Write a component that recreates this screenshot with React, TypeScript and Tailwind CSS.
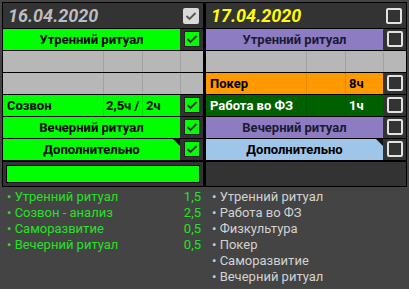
import React from "react";

type Row = {
  kind: "merged" | "split" | "empty";
  bg?: string;
  color?: string;
  text?: string;
  col2?: string;
  col3?: string;
  box?: "green" | "empty" | "none";
  corner?: boolean;
};

const Check = ({ color }: { color: string }) => (
  <svg width="12" height="12" viewBox="0 0 12 12" className="block">
    <polyline points="1.5,6 4.5,9 10.5,3" fill="none" stroke={color} strokeWidth="1.8" />
  </svg>
);

const Box = ({ type }: { type: "green" | "empty" | "light" }) => {
  if (type === "green")
    return (
      <div className="w-[16px] h-[16px] bg-[#00ff00] border border-[#222] flex items-center justify-center">
        <Check color="#333" />
      </div>
    );
  if (type === "light")
    return (
      <div className="w-[16px] h-[16px] bg-[#dadada] rounded-[2px] flex items-center justify-center">
        <Check color="#555" />
      </div>
    );
  return <div className="w-[16px] h-[16px] bg-[#333] border-2 border-[#e2e2e2] rounded-[2px]" />;
};

const RowView = ({ r }: { r: Row }) => {
  if (r.kind === "empty") {
    return (
      <div className="grid grid-cols-[100px_39px_38px_23px] h-[21px] bg-[#b7b7b7]">
        <div />
        <div className="border-l border-[#a2a2a2]" />
        <div className="border-l border-[#a2a2a2]" />
        <div className="border-l border-[#a2a2a2]" />
      </div>
    );
  }
  return (
    <div className="grid grid-cols-[100px_39px_38px_23px] h-[21px]">
      {r.kind === "merged" ? (
        <div
          className="col-span-3 relative flex items-center justify-center font-bold text-[13px]"
          style={{ background: r.bg, color: r.color }}
        >
          {r.text}
          {r.corner && (
            <div className="absolute top-0 right-0 w-0 h-0 border-t-[7px] border-l-[7px] border-t-[#111] border-l-transparent" />
          )}
        </div>
      ) : (
        <>
          <div className="flex items-center pl-[4px] font-bold text-[13px]" style={{ background: r.bg, color: r.color }}>
            {r.text}
          </div>
          <div
            className="flex items-center pl-[2px] font-bold text-[13px] border-l border-black/10"
            style={{ background: r.bg, color: r.color }}
          >
            {r.col2}
          </div>
          <div
            className="flex items-center pl-[3px] font-bold text-[13px] border-l border-black/10"
            style={{ background: r.bg, color: r.color }}
          >
            {r.col3}
          </div>
        </>
      )}
      <div className="bg-[#333] flex items-start justify-center pt-[2px]">
        {r.box === "green" ? <Box type="green" /> : <Box type="empty" />}
      </div>
    </div>
  );
};

const leftRows: Row[] = [
  { kind: "merged", bg: "#00ff00", color: "#000", text: "Утренний ритуал", box: "green" },
  { kind: "empty" },
  { kind: "empty" },
  { kind: "split", bg: "#00ff00", color: "#000", text: "Созвон", col2: "2,5ч /", col3: "2ч", box: "green" },
  { kind: "merged", bg: "#00ff00", color: "#000", text: "Вечерний ритуал", box: "green" },
  { kind: "merged", bg: "#00ff00", color: "#000", text: "Дополнительно", box: "green", corner: true },
];

const rightRows: Row[] = [
  { kind: "merged", bg: "#8e7cc3", color: "#1a1a33", text: "Утренний ритуал", box: "empty" },
  { kind: "empty" },
  { kind: "split", bg: "#ff9900", color: "#000", text: "Покер", col2: "", col3: "8ч", box: "empty" },
  { kind: "split", bg: "#006000", color: "#fff", text: "Работа во ФЗ", col2: "", col3: "1ч", box: "empty" },
  { kind: "merged", bg: "#8e7cc3", color: "#1a1a33", text: "Вечерний ритуал", box: "empty" },
  { kind: "merged", bg: "#9fc5e8", color: "#000", text: "Дополнительно", box: "empty", corner: true },
];

const Panel = ({
  date,
  dateColor,
  headBox,
  rows,
  progress,
}: {
  date: string;
  dateColor: string;
  headBox: "light" | "empty";
  rows: Row[];
  progress: boolean;
}) => (
  <div className="w-[200px] flex flex-col gap-[1px]">
    <div className="h-[25px] bg-[#333] flex items-center justify-between pl-[5px] pr-[4px]">
      <span className="font-bold italic text-[18px] leading-none" style={{ color: dateColor }}>
        {date}
      </span>
      <Box type={headBox} />
    </div>
    {rows.map((r, i) => (
      <RowView key={i} r={r} />
    ))}
    <div className="h-[24px] bg-[#333] p-[3px] mt-[1px]">
      {progress ? <div className="h-full bg-[#00ff00] border border-black" /> : <div className="h-full" />}
    </div>
  </div>
);

const leftList = [
  ["Утренний ритуал", "1,5"],
  ["Созвон - анализ", "2,5"],
  ["Саморазвитие", "0,5"],
  ["Вечерний ритуал", "0,5"],
];
const rightList = ["Утренний ритуал", "Работа во ФЗ", "Физкультура", "Покер", "Саморазвитие", "Вечерний ритуал"];

export default function App() {
  return (
    <div
      className="w-[409px] h-[289px] bg-[#444] pt-[2px] pl-[2px] overflow-hidden"
      style={{ fontFamily: "Roboto, 'Noto Sans', sans-serif" }}
    >
      <div className="w-[405px] bg-black p-[1px] flex gap-[3px]">
        <Panel date="16.04.2020" dateColor="#bdbdbd" headBox="light" rows={leftRows} progress />
        <Panel date="17.04.2020" dateColor="#ffff00" headBox="empty" rows={rightRows} progress={false} />
      </div>
      <div className="flex gap-[3px] pl-[1px] pt-[2px] text-[13px] leading-[16px]">
        <div className="w-[200px] pl-[4px] pr-[2px] text-[#26e026]">
          {leftList.map(([n, v]) => (
            <div key={n} className="flex justify-between">
              <span>• {n}</span>
              <span>{v}</span>
            </div>
          ))}
        </div>
        <div className="w-[200px] pl-[6px] text-[#d2d2d2]">
          {rightList.map((n) => (
            <div key={n}>• {n}</div>
          ))}
        </div>
      </div>
    </div>
  );
}
